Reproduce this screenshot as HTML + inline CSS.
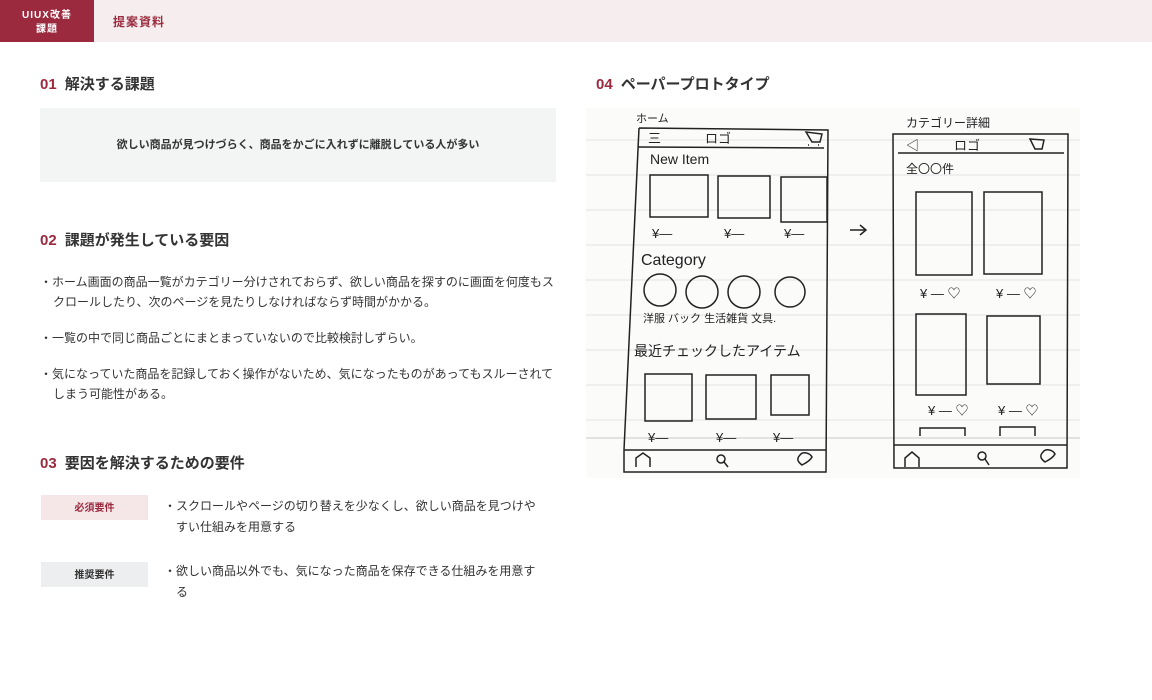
<!DOCTYPE html>
<html><head><meta charset="utf-8"><style>
*{margin:0;padding:0;box-sizing:border-box}
body{width:1152px;height:700px;background:#fff;font-family:"Liberation Sans","Noto Sans CJK JP",sans-serif;color:#333;position:relative;overflow:hidden}
.hdr{position:absolute;left:0;top:0;width:1152px;height:42px;background:#f5edee}
.brand{position:absolute;left:0;top:0;width:94px;height:42px;background:#9b2a3e;color:#fff;font-size:10px;font-weight:bold;text-align:center;line-height:14px;padding-top:8px;letter-spacing:1px}
.ttl{position:absolute;left:113px;top:13px;font-size:12px;color:#9b2a3e;font-weight:bold;letter-spacing:1px}
h2{position:absolute;font-size:15px;font-weight:bold;color:#333}
h2 b{color:#9b2a3e;margin-right:8px}
.box{position:absolute;left:40px;top:108px;width:516px;height:74px;background:#f3f4f4;font-size:11px;font-weight:bold;text-align:center;line-height:74px;color:#333}
.li{position:absolute;left:40px;width:520px;font-size:12px;line-height:20px;padding-left:13px;text-indent:-13px}
.tag{position:absolute;left:41px;width:107px;height:25px;font-size:10px;font-weight:bold;text-align:center;line-height:25px}
.rq{position:absolute;left:164px;width:380px;font-size:12px;line-height:21px;padding-left:12px;text-indent:-12px}
</style></head><body>
<div class="hdr"></div>
<div class="brand" style="padding-top:9px">UIUX改善<br>課題</div>
<div class="ttl">提案資料</div>
<h2 style="left:40px;top:73px"><b>01</b>解決する課題</h2>
<div class="box">欲しい商品が見つけづらく、商品をかごに入れずに離脱している人が多い</div>
<h2 style="left:40px;top:229px"><b>02</b>課題が発生している要因</h2>
<div class="li" style="top:272px">・ホーム画面の商品一覧がカテゴリー分けされておらず、欲しい商品を探すのに画面を何度もスクロールしたり、次のページを見たりしなければならず時間がかかる。</div>
<div class="li" style="top:328px">・一覧の中で同じ商品ごとにまとまっていないので比較検討しずらい。</div>
<div class="li" style="top:364px">・気になっていた商品を記録しておく操作がないため、気になったものがあってもスルーされてしまう可能性がある。</div>
<h2 style="left:40px;top:452px"><b>03</b>要因を解決するための要件</h2>
<div class="tag" style="top:495px;background:#f5e6e8;color:#9b2a3e;line-height:27px">必須要件</div>
<div class="rq" style="top:496px">・スクロールやページの切り替えを少なくし、欲しい商品を見つけやすい仕組みを用意する</div>
<div class="tag" style="top:562px;background:#eceeef;color:#333;line-height:27px">推奨要件</div>
<div class="rq" style="top:561px">・欲しい商品以外でも、気になった商品を保存できる仕組みを用意する</div>
<h2 style="left:596px;top:73px"><b>04</b>ペーパープロトタイプ</h2>
<svg style="position:absolute;left:586px;top:108px" width="494" height="370" viewBox="586 108 494 370">
<rect x="586" y="108" width="494" height="370" fill="#fbfbfa"/>
<g stroke="#e2e4e6" stroke-width="1">
<line x1="586" y1="140" x2="1080" y2="140"/><line x1="586" y1="175" x2="1080" y2="175"/><line x1="586" y1="210" x2="1080" y2="210"/><line x1="586" y1="245" x2="1080" y2="245"/><line x1="586" y1="280" x2="1080" y2="280"/><line x1="586" y1="315" x2="1080" y2="315"/><line x1="586" y1="350" x2="1080" y2="350"/><line x1="586" y1="385" x2="1080" y2="385"/><line x1="586" y1="420" x2="1080" y2="420"/><line x1="586" y1="438" x2="1080" y2="438" stroke="#c8cacc"/>
</g>
<g fill="none" stroke="#222" stroke-width="1.5">
<path d="M639 128 L828 130 L826 472 L624 472 L624 450 L639 128"/>
<line x1="638" y1="147" x2="824" y2="148"/>
<line x1="624" y1="450" x2="826" y2="450"/>
<rect x="650" y="175" width="58" height="42"/><rect x="718" y="176" width="52" height="42"/><rect x="781" y="177" width="46" height="45"/>
<circle cx="660" cy="290" r="16"/><circle cx="702" cy="292" r="16"/><circle cx="744" cy="292" r="16"/><circle cx="790" cy="292" r="15"/>
<rect x="645" y="374" width="47" height="47"/><rect x="706" y="375" width="50" height="44"/><rect x="771" y="375" width="38" height="40"/>
<path d="M893 134 L1068 134 L1067 468 L894 468 Z"/>
<line x1="898" y1="153" x2="1064" y2="153"/><line x1="894" y1="445" x2="1067" y2="445"/>
<rect x="916" y="192" width="56" height="83"/><rect x="984" y="192" width="58" height="82"/>
<rect x="916" y="314" width="50" height="81"/><rect x="987" y="316" width="53" height="68"/>
<path d="M920 436 L920 428 L965 428 L965 436 M1000 436 L1000 427 L1035 427 L1035 436"/>
<path d="M850 230 L866 230 M860 225 L866 230 L860 235"/>
<path d="M806 132 L812 142 L820 142 L822 134 Z M808 145 h1 M818 145 h1"/>
<path d="M1030 139 L1035 149 L1042 149 L1044 140 Z"/>
<path d="M800 455 c3 -4 10 -2 12 2 c-2 4 -8 7 -10 8 c-4 -3 -6 -6 -2 -10z"/>
<path d="M1043 452 c3 -4 10 -2 12 2 c-2 4 -8 7 -10 8 c-4 -3 -6 -6 -2 -10z"/>
<circle cx="721" cy="459" r="4"/><line x1="724" y1="462" x2="728" y2="467"/>
<circle cx="982" cy="456" r="4"/><line x1="985" y1="459" x2="989" y2="465"/>
<path d="M636 467 L636 458 L643 453 L650 458 L650 467"/><path d="M905 467 L905 458 L912 452 L919 458 L919 467"/>
</g>
<g font-family="Liberation Sans,Noto Sans CJK JP,sans-serif" fill="#222" font-size="13">
<text x="636" y="122" font-size="11">ホーム</text>
<text x="648" y="143">三</text><text x="705" y="143">ロゴ</text>
<text x="650" y="164" font-size="14">New Item</text>
<text x="652" y="238">¥—</text><text x="724" y="238">¥—</text><text x="784" y="238">¥—</text>
<text x="641" y="265" font-size="16">Category</text>
<text x="643" y="322" font-size="11">洋服 バック 生活雑貨 文具.</text>
<text x="634" y="356" font-size="14">最近チェックしたアイテム</text>
<text x="648" y="442">¥—</text><text x="716" y="442">¥—</text><text x="773" y="442">¥—</text>
<text x="906" y="127" font-size="12">カテゴリー詳細</text>
<text x="906" y="150">◁</text><text x="954" y="150">ロゴ</text>
<text x="906" y="173" font-size="12">全〇〇件</text>
<text x="920" y="298">¥ — ♡</text><text x="996" y="298">¥ — ♡</text>
<text x="928" y="415">¥ — ♡</text><text x="998" y="415">¥ — ♡</text>
</g>
</svg>
</body></html>
